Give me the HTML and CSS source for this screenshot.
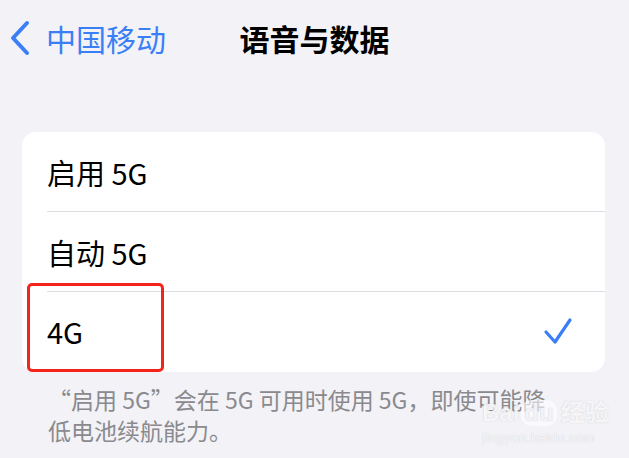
FILE: index.html
```html
<!DOCTYPE html>
<html lang="zh-CN">
<head>
  <meta charset="UTF-8">
  <meta name="viewport" content="width=device-width, initial-scale=1.0">
  <title>语音与数据</title>
  <link rel="stylesheet" href="styles.css">
</head>
<body>
  <div class="nav">
    <a class="back" href="#">
      <svg class="chevron" width="22" height="36" viewBox="0 0 22 36">
        <path d="M18 3 L4 18 L18 33" fill="none" stroke="#3a7ff5" stroke-width="4" stroke-linecap="round" stroke-linejoin="round"/>
      </svg>
      <span>中国移动</span>
    </a>
    <h1 class="title">语音与数据</h1>
    <div></div>
  </div>

  <div class="content">
    <div class="card">
      <div class="row"><div class="row-inner">启用 5G</div></div>
      <div class="row"><div class="row-inner">自动 5G</div></div>
      <div class="row"><div class="row-inner last">4G
        <svg class="check" width="30" height="28" viewBox="0 0 30 28">
          <path d="M3 15 L12 25 L27 3" fill="none" stroke="#3a7ff5" stroke-width="3.2" stroke-linecap="round" stroke-linejoin="round"/>
        </svg>
      </div></div>
      <div class="highlight"></div>
    </div>
    <p class="note">“启用 5G”会在 5G 可用时使用 5G，即使可能降<br>低电池续航能力。</p>
    <div class="watermark">
      <div class="wm-logo">Bai<span class="wm-du">du</span>经验</div>
      <div class="wm-url">jingyan.baidu.com</div>
    </div>
  </div>
</body>
</html>
```

FILE: styles.css
```css
body {
  margin: 0;
  background-color: #f2f2f7;
  font-family: "Noto Sans CJK SC", "Noto Sans", sans-serif;
  color: #000;
}

.nav {
  display: grid;
  grid-template-columns: 1fr auto 1fr;
  align-items: center;
  height: 76px;
}

.back {
  display: flex;
  align-items: center;
  padding-left: 9px;
  color: #3a7ff5;
  text-decoration: none;
  font-size: 30px;
}

.chevron {
  margin-right: 15px;
}

.title {
  margin: 0;
  font-size: 30px;
  font-weight: 700;
}

.content {
  position: relative;
  padding-top: 56px;
}

.card {
  position: relative;
  margin: 0 24px 0 22px;
  background-color: #fff;
  border-radius: 14px;
}

.row {
  height: 80px;
  padding-left: 25px;
}

.row-inner {
  display: flex;
  align-items: center;
  justify-content: space-between;
  height: 79px;
  border-bottom: 1px solid #dedee2;
  font-size: 29px;
  padding-right: 32px;
}

.row-inner.last {
  border-bottom: none;
  height: 80px;
  padding-bottom: 3px;
  box-sizing: border-box;
}

.highlight {
  position: absolute;
  left: 5px;
  top: 151px;
  width: 131px;
  height: 83px;
  border: 3px solid #f5231c;
  border-radius: 5px;
}

.note {
  margin: 12px 0 0 48px;
  font-size: 23px;
  line-height: 31px;
  color: #8a8a8e;
}

.watermark {
  position: absolute;
  left: 482px;
  top: 324px;
  white-space: nowrap;
  color: rgba(255, 255, 255, 0.85);
  text-shadow: 0 0 1px rgba(150, 150, 160, 0.5);
}

.wm-logo {
  font-family: "Liberation Sans", "Noto Sans CJK SC", sans-serif;
  font-size: 24px;
  font-weight: 700;
  line-height: 26px;
}

.wm-du {
  display: inline-block;
  margin: 0 4px 0 2px;
  padding: 0 3px;
  border-radius: 10px;
  background-color: rgba(255, 255, 255, 0.6);
  color: #f2f2f7;
}

.wm-url {
  margin-top: 4px;
  font-family: "Liberation Sans", sans-serif;
  font-size: 13px;
  letter-spacing: 0.5px;
}
```
